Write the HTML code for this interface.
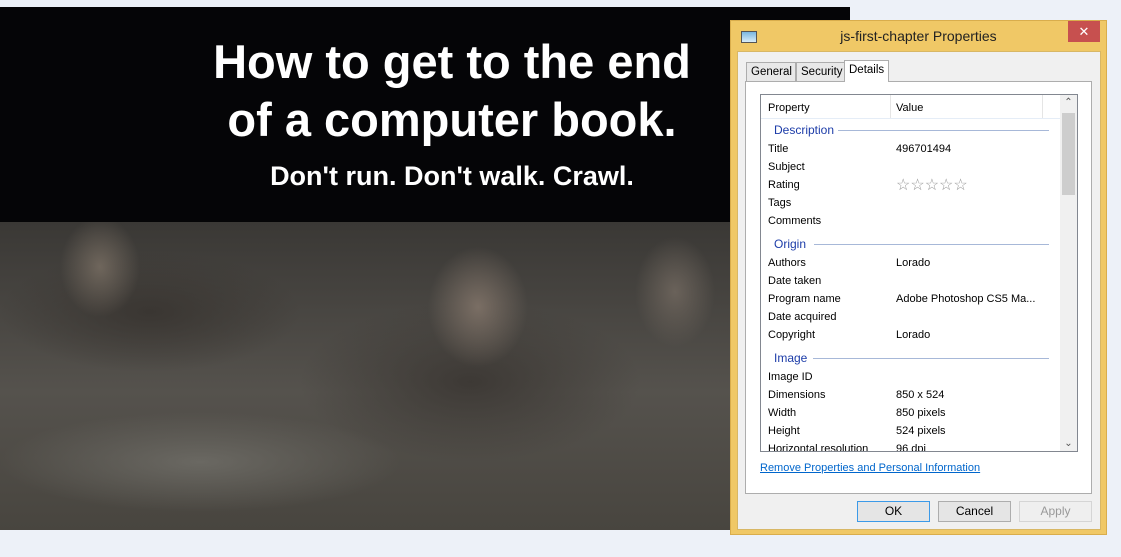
<!DOCTYPE html><html><head><style>
body{margin:0;width:1121px;height:557px;background:#edf1f8;position:relative;overflow:hidden;font-family:"Liberation Sans",sans-serif}
.blk{position:absolute;left:0;top:7px;width:850px;height:216px;background:#050507}
.h1{position:absolute;left:152px;width:600px;text-align:center;color:#fff;font-weight:bold;font-family:"Liberation Sans",sans-serif}
.photo{position:absolute;left:0;top:222px;width:731px;height:308px;background:
radial-gradient(ellipse 50px 60px at 478px 85px,#7a6e64,transparent),
radial-gradient(ellipse 170px 80px at 470px 160px,#3d3935,transparent),
radial-gradient(ellipse 40px 50px at 100px 45px,#6f665c,transparent),
radial-gradient(ellipse 150px 60px at 150px 90px,#3a3632,transparent),
radial-gradient(ellipse 40px 55px at 675px 70px,#6a625a,transparent),
radial-gradient(ellipse 200px 50px at 200px 240px,#6a6862,transparent),
linear-gradient(#3a3835,#55524d 55%,#48453f)}
.dlg{position:absolute;left:730px;top:20px;width:375px;height:513px;background:#f0c866;border:1px solid #d9ad4c}
.title{position:absolute;left:0;right:0;top:7px;text-align:center;font-size:14px;color:#222}
.x{position:absolute;right:6px;top:0;width:32px;height:21px;background:#c7504f;color:#fff;text-align:center;font-size:13px;line-height:21px}
.in{position:absolute;left:6px;top:30px;width:362px;height:477px;background:#f0f0f0;border:1px solid #d8b765}
.tab{position:absolute;top:10px;height:18px;border:1px solid #adadad;background:#e8e8e8;font-size:11.5px;line-height:18px;padding:0 4px;color:#000}
.pane{position:absolute;left:7px;top:29px;width:345px;height:411px;background:#fff;border:1px solid #adadad}
.list{position:absolute;left:14px;top:12px;width:316px;height:356px;border:1px solid #828790;overflow:hidden;font-size:11px}
.r{position:absolute;left:7px;height:18px}
.v{position:absolute;left:135px}
.sec{position:absolute;left:13px;color:#1c3ca8;font-size:12px}
.ln{position:absolute;height:1px;background:#a7b8d8;right:28px}
.btn{position:absolute;top:449px;width:71px;height:19px;border:1px solid #adadad;background:#e5e5e5;font-size:12px;text-align:center;line-height:19px}
</style></head><body>
<div class="blk"></div>
<div class="h1" style="top:34px;font-size:47px">How to get to the end</div>
<div class="h1" style="top:92px;font-size:47px">of a computer book.</div>
<div class="h1" style="top:161px;font-size:27px">Don't run. Don't walk. Crawl.</div>
<div class="photo"></div>
<div class="dlg">
<div style="position:absolute;left:10px;top:10px;width:14px;height:10px;background:linear-gradient(#7ab6e0,#d8ecf8);border:1px solid #555"></div>
<div class="title">js-first-chapter Properties</div>
<div class="x">✕</div>
<div class="in">
<div class="tab" style="left:8px;width:40px">General</div>
<div class="tab" style="left:58px;width:40px">Security</div>
<div class="tab" style="left:106px;top:8px;height:21px;background:#fff;border-bottom:none;z-index:2">Details</div>
<div class="pane">
<div class="list">
<div style="position:absolute;left:0;top:0;width:299px;height:23px;border-bottom:1px solid #e5edf7"></div>
<div style="position:absolute;left:129px;top:0;width:1px;height:23px;background:#e5e5e5"></div>
<div style="position:absolute;left:281px;top:0;width:1px;height:23px;background:#e5e5e5"></div>
<div class="r" style="top:7px">Property</div><div class="r v" style="top:7px">Value</div>
<div style="position:absolute;right:0;top:0;width:17px;height:356px;background:#f0f0f0"><div style="position:absolute;top:18px;left:2px;width:13px;height:82px;background:#cdcdcd"></div><div style="position:absolute;top:2px;width:17px;text-align:center;font-size:10px;color:#555">⌃</div><div style="position:absolute;bottom:2px;width:17px;text-align:center;font-size:10px;color:#555">⌄</div></div>
<div class="sec" style="top:28px">Description</div><div class="ln" style="left:77px;top:35px"></div>
<div class="r" style="top:48px">Title</div><div class="r v" style="top:48px">496701494</div>
<div class="r" style="top:66px">Subject</div>
<div class="r" style="top:84px">Rating</div><div class="r v" style="top:80px;color:#999;font-size:16px;letter-spacing:0px">☆☆☆☆☆</div>
<div class="r" style="top:102px">Tags</div>
<div class="r" style="top:120px">Comments</div>
<div class="sec" style="top:142px">Origin</div><div class="ln" style="left:53px;top:149px"></div>
<div class="r" style="top:162px">Authors</div><div class="r v" style="top:162px">Lorado</div>
<div class="r" style="top:180px">Date taken</div>
<div class="r" style="top:198px">Program name</div><div class="r v" style="top:198px">Adobe Photoshop CS5 Ma...</div>
<div class="r" style="top:216px">Date acquired</div>
<div class="r" style="top:234px">Copyright</div><div class="r v" style="top:234px">Lorado</div>
<div class="sec" style="top:256px">Image</div><div class="ln" style="left:52px;top:263px"></div>
<div class="r" style="top:276px">Image ID</div>
<div class="r" style="top:294px">Dimensions</div><div class="r v" style="top:294px">850 x 524</div>
<div class="r" style="top:312px">Width</div><div class="r v" style="top:312px">850 pixels</div>
<div class="r" style="top:330px">Height</div><div class="r v" style="top:330px">524 pixels</div>
<div class="r" style="top:348px">Horizontal resolution</div><div class="r v" style="top:348px">96 dpi</div>
</div>
<div style="position:absolute;left:14px;top:380px;font-size:11px;color:#0066cc;text-decoration:underline">Remove Properties and Personal Information</div>
</div>
<div class="btn" style="left:119px;border-color:#3c9ae8">OK</div>
<div class="btn" style="left:200px">Cancel</div>
<div class="btn" style="left:281px;color:#999;border-color:#d5d5d5;background:#efefef">Apply</div>
</div></div>
</body></html>
